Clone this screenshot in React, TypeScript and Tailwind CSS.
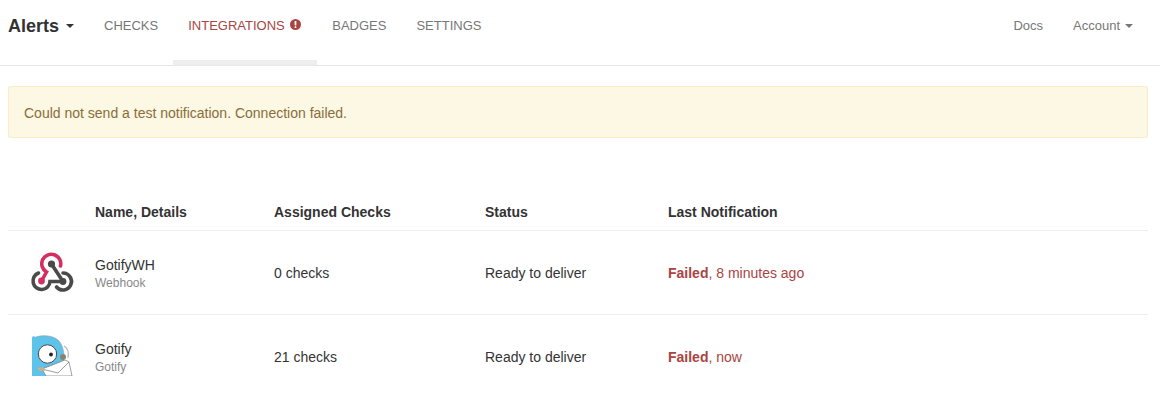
function Caret({ className }: { className: string }) {
  return <span className={`inline-block h-0 w-0 border-x-4 border-t-4 border-x-transparent ${className}`} />;
}

function AlertIcon() {
  return (
    <svg viewBox="0 0 11 11" className="mt-[3px] ml-[5px] h-[11px] w-[11px]">
      <circle cx="5.5" cy="5.5" r="5.5" fill="#a94442" />
      <rect x="4.6" y="2" width="1.8" height="4.4" rx="0.6" fill="#fff" />
      <rect x="4.6" y="7.2" width="1.8" height="1.8" rx="0.5" fill="#fff" />
    </svg>
  );
}

function WebhookIcon() {
  return (
    <svg viewBox="-4 -3 48 46" className="h-[46px] w-[48px]" fill="none" strokeWidth="3.6" strokeLinecap="round">
      <path d="M6.5 19 A8.5 8.5 0 1 0 18 27.5 L31 27.5" stroke="#4a4a4a" />
      <path d="M31 19 A8.5 8.5 0 1 1 24.5 33" stroke="#4a4a4a" />
      <path d="M19.5 10 L31 27.5" stroke="#4a4a4a" />
      <path d="M9.5 27 L14.5 18 A9.5 9.5 0 1 1 28.5 12" stroke="#d4305f" />
      <circle cx="9.5" cy="27" r="3.4" fill="#d4305f" />
      <circle cx="19.5" cy="10" r="3.6" fill="#4a4a4a" />
      <circle cx="31" cy="27.5" r="3.4" fill="#4a4a4a" />
    </svg>
  );
}

function GotifyIcon() {
  return (
    <svg viewBox="0 1 48 46" className="h-[46px] w-[48px]">
      <path d="M4 42 L4 4 C4 2 6 2 8 3 C14 1 24 1 30 6 C34 10 36 16 36 24 L36 42 Z" fill="#5ec3ea" />
      <path d="M8 3 C14 1 24 1 30 6 C34 10 36 16 36 24" fill="none" stroke="#8a9aa0" strokeWidth="0.6" />
      <path d="M36 12 C40 14 41 18 40 24" fill="none" stroke="#b5b5b0" strokeWidth="1.2" />
      <circle cx="19.5" cy="20" r="9.2" fill="#fff" stroke="#4a4a4a" strokeWidth="1" />
      <circle cx="23" cy="20.5" r="1.9" fill="#222" />
      <circle cx="35" cy="23" r="3" fill="#8d8468" />
      <path d="M14 35 L37 26 L41 28 L44 42 L18 42 Z" fill="#fff" stroke="#777" strokeWidth="0.7" />
      <path d="M14 35 L30 39 L41 28" fill="none" stroke="#777" strokeWidth="0.7" />
      <path d="M9 34 L15 33 L17 37 L12 37 Z" fill="#c8b48a" />
    </svg>
  );
}

const ROWS = [
  { icon: <WebhookIcon />, name: "GotifyWH", kind: "Webhook", checks: "0 checks", when: ", 8 minutes ago" },
  { icon: <GotifyIcon />, name: "Gotify", kind: "Gotify", checks: "21 checks", when: ", now" },
];

export default function App() {
  return (
    <div className="h-[418px] w-[1160px] overflow-hidden bg-white font-['Liberation_Sans',Arial,sans-serif] text-[14px] text-[#333]">
      <nav className="flex h-[66px] border-b border-[#e7e7e7] pr-[12px] pl-[8px]">
        <a className="mr-[15px] flex h-[52px] items-center gap-[7px] text-[18px] font-bold text-[#333]">
          Alerts
          <Caret className="border-t-[#333]" />
        </a>
        <ul className="flex text-[13px] text-[#777]">
          <li className="flex h-[52px] items-center px-[15px]">CHECKS</li>
          <li className="flex h-[65px] w-[144px] items-start border-b-[5px] border-[#eee] px-[15px] pt-[16px] text-[#a94442]">
            <span className="leading-[20px]">INTEGRATIONS</span>
            <AlertIcon />
          </li>
          <li className="flex h-[52px] items-center px-[15px]">BADGES</li>
          <li className="flex h-[52px] items-center px-[15px]">SETTINGS</li>
        </ul>
        <ul className="ml-auto flex text-[13px] text-[#777]">
          <li className="flex h-[52px] items-center px-[15px]">Docs</li>
          <li className="flex h-[52px] items-center gap-[5px] px-[15px]">
            Account
            <Caret className="border-t-[#777]" />
          </li>
        </ul>
      </nav>

      <div className="mt-[20px] ml-[8px] h-[52px] w-[1140px] rounded-[2px] border border-[#faebcc] bg-[#fcf8e3] px-[15px] pt-[16px] leading-[20px] text-[#8a6d3b]">
        Could not send a test notification. Connection failed.
      </div>

      <div className="mt-[64px] ml-[8px] h-[174px] w-[1140px] overflow-hidden">
        <div className="grid h-[29px] grid-cols-[87px_179px_211px_183px_1fr] border-b border-[#eee] font-bold">
          <span />
          <span>Name, Details</span>
          <span>Assigned Checks</span>
          <span>Status</span>
          <span>Last Notification</span>
        </div>
        {ROWS.map((row) => (
          <div key={row.name} className="grid h-[84px] grid-cols-[87px_179px_211px_183px_1fr] items-center border-b border-[#eee] pt-[2px]">
            <div className="pl-[20px]">{row.icon}</div>
            <div>
              <div className="leading-[18px]">{row.name}</div>
              <div className="mt-[1px] text-[12px] leading-[17px] text-[#888]">{row.kind}</div>
            </div>
            <span>{row.checks}</span>
            <span>Ready to deliver</span>
            <span className="text-[#a94442]">
              <strong>Failed</strong>
              {row.when}
            </span>
          </div>
        ))}
      </div>
    </div>
  );
}
